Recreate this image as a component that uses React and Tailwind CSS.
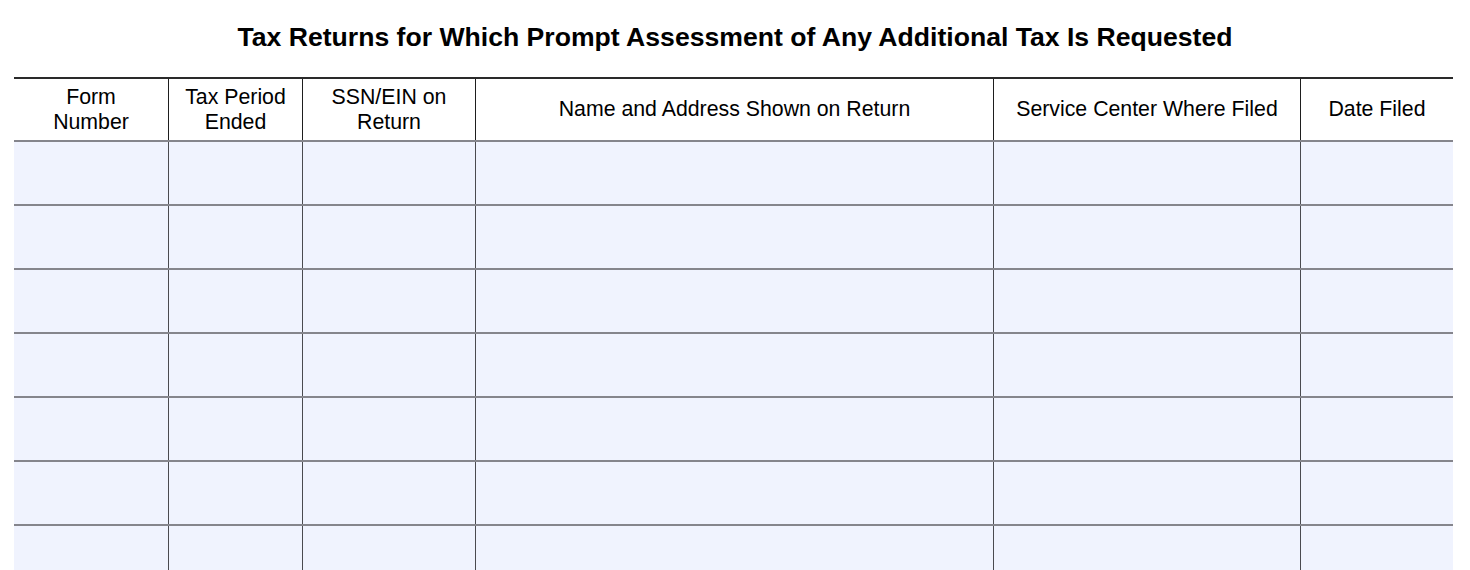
const columns = [
  { w: 'w-[155px]', label: ['Form', 'Number'] },
  { w: 'w-[134px]', label: ['Tax Period', 'Ended'] },
  { w: 'w-[173px]', label: ['SSN/EIN on', 'Return'] },
  { w: 'w-[518px]', label: ['Name and Address Shown on Return'] },
  { w: 'w-[307px]', label: ['Service Center Where Filed'] },
  { w: 'w-[152px]', label: ['Date Filed'] },
];

const rows = [0, 1, 2, 3, 4, 5, 6];

export default function App() {
  return (
    <div className="w-[1470px] h-[570px] overflow-hidden bg-white text-black" style={{ fontFamily: '"Liberation Sans", Arial, sans-serif' }}>
      <div className="h-[77px] pt-[20px] text-center text-[26.6px] font-bold leading-[34px]">
        Tax Returns for Which Prompt Assessment of Any Additional Tax Is Requested
      </div>
      <div className="ml-[14px] w-[1439px] border-t-2 border-[#2a2a2a]">
        <div className="flex h-[63px] border-b-2 border-[#85858c]">
          {columns.map((c, i) => (
            <div
              key={i}
              className={`${c.w} flex flex-col items-center justify-center bg-white text-[21.3px] leading-[25px] ${i < columns.length - 1 ? 'border-r-[1.5px] border-[#1e1e1e]' : ''}`}
            >
              {c.label.map((l) => (
                <span key={l}>{l}</span>
              ))}
            </div>
          ))}
        </div>
        {rows.map((r) => (
          <div key={r} className="flex h-[64px] border-b-2 border-[#85858c]">
            {columns.map((c, i) => (
              <div
                key={i}
                className={`${c.w} bg-[#f0f3fe] ${i < columns.length - 1 ? 'border-r-[1.5px] border-[#4a4a4f]' : ''}`}
              />
            ))}
          </div>
        ))}
      </div>
    </div>
  );
}
